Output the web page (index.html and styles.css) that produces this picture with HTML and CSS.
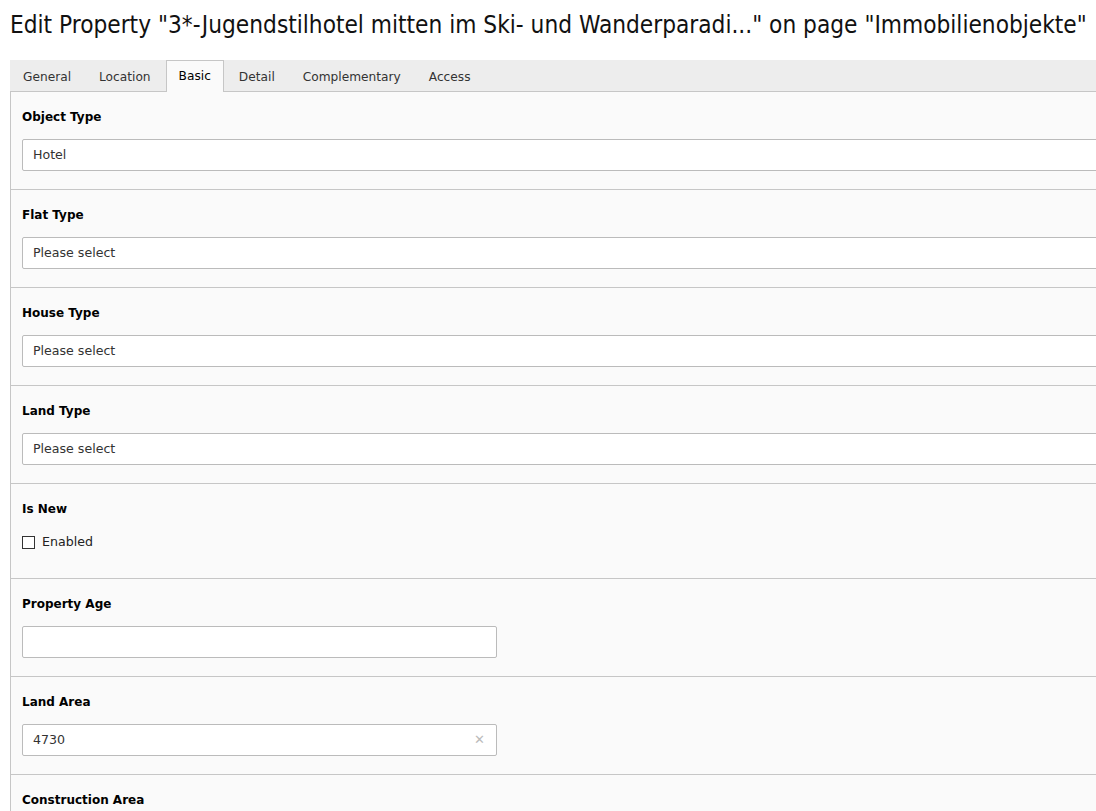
FILE: index.html
```html
<!DOCTYPE html>
<html>
<head>
<meta charset="utf-8">
<link rel="stylesheet" href="styles.css">
</head>
<body>
<h1 class="title">Edit Property "3*-Jugendstilhotel mitten im Ski- und Wanderparadi..." on page "Immobilienobjekte"</h1>
<div class="editor">
  <ul class="tabs">
    <li class="tab">General</li>
    <li class="tab">Location</li>
    <li class="tab active">Basic</li>
    <li class="tab">Detail</li>
    <li class="tab">Complementary</li>
    <li class="tab">Access</li>
  </ul>
  <div class="panel">
    <div class="field">
      <div class="label">Object Type</div>
      <div class="input full">Hotel</div>
    </div>
    <div class="field">
      <div class="label">Flat Type</div>
      <div class="input full">Please select</div>
    </div>
    <div class="field">
      <div class="label">House Type</div>
      <div class="input full">Please select</div>
    </div>
    <div class="field">
      <div class="label">Land Type</div>
      <div class="input full">Please select</div>
    </div>
    <div class="field check-field">
      <div class="label">Is New</div>
      <label class="check"><span class="box"></span><span>Enabled</span></label>
    </div>
    <div class="field">
      <div class="label">Property Age</div>
      <div class="input short"></div>
    </div>
    <div class="field">
      <div class="label">Land Area</div>
      <div class="input short">4730<span class="clear">&#x2715;</span></div>
    </div>
    <div class="field">
      <div class="label">Construction Area</div>
      <div class="input short"></div>
    </div>
  </div>
</div>
</body>
</html>
```
FILE: styles.css
```css
html {
  overflow: hidden;
}
body {
  margin: 0;
  padding: 0 0 0 10px;
  background: #fff;
  font-family: "DejaVu Sans", Verdana, sans-serif;
  font-size: 12px;
  color: #000;
}
.title {
  margin: 0;
  padding: 9px 0 0 0;
  height: 60px;
  box-sizing: border-box;
  font-family: "DejaVu Sans Condensed", "DejaVu Sans", sans-serif;
  font-stretch: condensed;
  font-weight: normal;
  font-size: 24.2px;
  line-height: 32px;
  white-space: nowrap;
  color: #111;
}
.editor {
  width: 1120px;
}
.tabs {
  list-style: none;
  margin: 0;
  padding: 0;
  display: flex;
  gap: 2px;
  background: #ededed;
  border-bottom: 1px solid #c6c6c6;
  height: 31px;
  align-items: flex-end;
}
.tab {
  padding: 0 12px;
  height: 30px;
  line-height: 30px;
  border: 1px solid transparent;
  border-bottom: none;
  color: #333;
  margin-bottom: -1px;
  font-size: 12.2px;
}
.tab.active {
  background: #fafafa;
  border-color: #c6c6c6;
  height: 31px;
  color: #000;
}
.panel {
  background: #fafafa;
  border-left: 1px solid #c6c6c6;
}
.field {
  padding: 16px 11px 18px 11px;
  border-bottom: 1px solid #c6c6c6;
}
.label {
  font-weight: bold;
  line-height: 18px;
  font-size: 12px;
}
.input {
  margin-top: 13px;
  height: 32px;
  box-sizing: border-box;
  background: #fff;
  border: 1px solid #bbb;
  border-radius: 2px;
  padding: 0 10px;
  line-height: 30px;
  color: #333;
  font-size: 12.6px;
  position: relative;
}
.input.full {
  width: 1200px;
}
.input.short {
  width: 475px;
}
.clear {
  position: absolute;
  right: 11px;
  top: 0;
  color: #bbb;
  font-size: 13px;
}
.check-field {
  padding-bottom: 27px;
}
.check {
  display: flex;
  align-items: center;
  margin-top: 15px;
  line-height: 18px;
  color: #222;
  font-size: 12.6px;
}
.box {
  width: 11px;
  height: 11px;
  border: 1px solid #333;
  background: #fff;
  margin-right: 7px;
}
```
